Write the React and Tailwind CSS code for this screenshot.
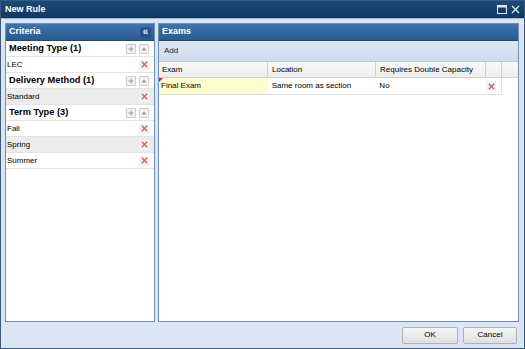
import React from "react";

const font = { fontFamily: '"Liberation Sans", Arial, sans-serif' };

function SmallBtn({ children }) {
  return (
    <span className="w-[10px] h-[10px] border border-[#c9ccd0] bg-[#f1f2f3] rounded-[1px] flex items-center justify-center text-[#9aa0a6]">
      {children}
    </span>
  );
}

function Plus() {
  return (
    <SmallBtn>
      <svg width="6" height="6" viewBox="0 0 6 6">
        <path d="M3 0.5V5.5M0.5 3H5.5" stroke="#8f959b" strokeWidth="1" />
      </svg>
    </SmallBtn>
  );
}

function Up() {
  return (
    <SmallBtn>
      <svg width="6" height="4" viewBox="0 0 6 4">
        <path d="M0.5 3.5L3 0.5L5.5 3.5Z" fill="#8f959b" />
      </svg>
    </SmallBtn>
  );
}

function Del() {
  return (
    <span className="w-[10px] h-[10px] bg-[#f4f1f1] flex items-center justify-center">
      <svg width="7" height="7" viewBox="0 0 7 7">
        <path d="M0.8 0.8L6.2 6.2M6.2 0.8L0.8 6.2" stroke="#d0625a" strokeWidth="1.3" />
      </svg>
    </span>
  );
}

function GroupRow({ label }) {
  return (
    <div className="h-[16px] flex items-center justify-between pl-[3px] pr-[5px] border-b border-[#e2e4e7] bg-white">
      <span className="text-[9.25px] font-bold text-black">{label}</span>
      <div className="flex gap-[3px]">
        <Plus />
        <Up />
      </div>
    </div>
  );
}

function ItemRow({ label, gray }) {
  return (
    <div className={`h-[16px] flex items-center justify-between pl-[1px] pr-[5px] border-b border-[#e2e4e7] ${gray ? "bg-[#ececec]" : "bg-white"}`}>
      <span className="text-[8px] text-black">{label}</span>
      <Del />
    </div>
  );
}

function PanelHeader({ title, collapse }) {
  return (
    <div className="h-[17px] flex items-center justify-between pl-[3px] pr-[3px] bg-gradient-to-b from-[#3f73aa] to-[#2a5b90] border-b border-[#1f4a78]">
      <span className="text-[9px] font-bold text-white">{title}</span>
      {collapse && (
        <span className="w-[11px] h-[11px] rounded-[2px] bg-[#24548a] flex items-center justify-center text-[#e8f0fa] text-[10px] font-bold leading-none">
          «
        </span>
      )}
    </div>
  );
}

export default function App() {
  return (
    <div style={font} className="w-[525px] h-[349px] bg-[#dbe5f4] border border-[#3b5a7e] flex flex-col overflow-hidden">
      {/* Title bar */}
      <div className="h-[18px] flex items-center justify-between pl-[4px] pr-[4px] bg-gradient-to-b from-[#1d4a79] to-[#0f3761] border-b border-[#9fb7d6]">
        <span className="text-[9px] font-bold text-white">New Rule</span>
        <div className="flex items-center gap-[4px]">
          <svg width="10" height="9" viewBox="0 0 10 9">
            <rect x="0.5" y="0.5" width="9" height="8" fill="none" stroke="#dce6f2" />
            <rect x="0.5" y="0.5" width="9" height="2" fill="#dce6f2" />
          </svg>
          <svg width="9" height="9" viewBox="0 0 9 9">
            <path d="M1 1L8 8M8 1L1 8" stroke="#dce6f2" strokeWidth="1.4" />
          </svg>
        </div>
      </div>

      {/* Content */}
      <div className="flex-1 flex gap-[3px] pl-[4px] pr-[5px] pt-[4px] min-h-0">
        {/* Criteria */}
        <div className="w-[150px] flex flex-col border border-[#6f8fb6] bg-white">
          <PanelHeader title="Criteria" collapse />
          <GroupRow label="Meeting Type (1)" />
          <ItemRow label="LEC" />
          <GroupRow label="Delivery Method (1)" />
          <ItemRow label="Standard" gray />
          <GroupRow label="Term Type (3)" />
          <ItemRow label="Fall" />
          <ItemRow label="Spring" gray />
          <ItemRow label="Summer" />
          <div className="flex-1" />
        </div>

        {/* Exams */}
        <div className="flex-1 flex flex-col border border-[#6f8fb6] bg-white">
          <PanelHeader title="Exams" />
          <div className="h-[21px] flex items-center pl-[5px] bg-gradient-to-b from-[#dbe6f4] to-[#cfdcee] border-b border-[#b7c8de]">
            <span className="text-[8px] text-[#222]">Add</span>
          </div>
          <div className="h-[16px] flex bg-gradient-to-b from-[#fafafa] to-[#ececec] border-b border-[#d0d0d0] text-[8px] text-black">
            <div className="w-[109px] flex items-center pl-[3px] border-r border-[#d0d0d0]">Exam</div>
            <div className="w-[108px] flex items-center pl-[4px] border-r border-[#d0d0d0]">Location</div>
            <div className="w-[110px] flex items-center pl-[4px] border-r border-[#d0d0d0]">Requires Double Capacity</div>
            <div className="w-[16px] border-r border-[#d0d0d0]" />
            <div className="flex-1" />
          </div>
          <div className="w-[343px] h-[17px] flex text-[8px] text-black border-b border-r border-[#e0e0e0]">
            <div className="relative w-[109px] flex items-center pl-[2px] bg-[#fdfdcf]">
              <span className="absolute left-0 top-0 w-0 h-0 border-t-[4px] border-r-[4px] border-t-[#e0201a] border-r-transparent" />
              Final Exam
            </div>
            <div className="w-[108px] flex items-center pl-[4px]">Same room as section</div>
            <div className="w-[110px] flex items-center pl-[4px]">No</div>
            <div className="w-[16px] flex items-center justify-start pl-[1px]">
              <Del />
            </div>
          </div>
          <div className="flex-1" />
        </div>
      </div>

      {/* Footer */}
      <div className="h-[26px] flex items-center justify-end gap-[5px] pr-[7px]">
        <button className="w-[56px] h-[17px] border border-[#a9b2bd] rounded-[2px] bg-gradient-to-b from-[#f6f6f6] to-[#dedede] text-[8px] text-black">
          OK
        </button>
        <button className="w-[54px] h-[17px] border border-[#a9b2bd] rounded-[2px] bg-gradient-to-b from-[#f6f6f6] to-[#dedede] text-[8px] text-black">
          Cancel
        </button>
      </div>
    </div>
  );
}
